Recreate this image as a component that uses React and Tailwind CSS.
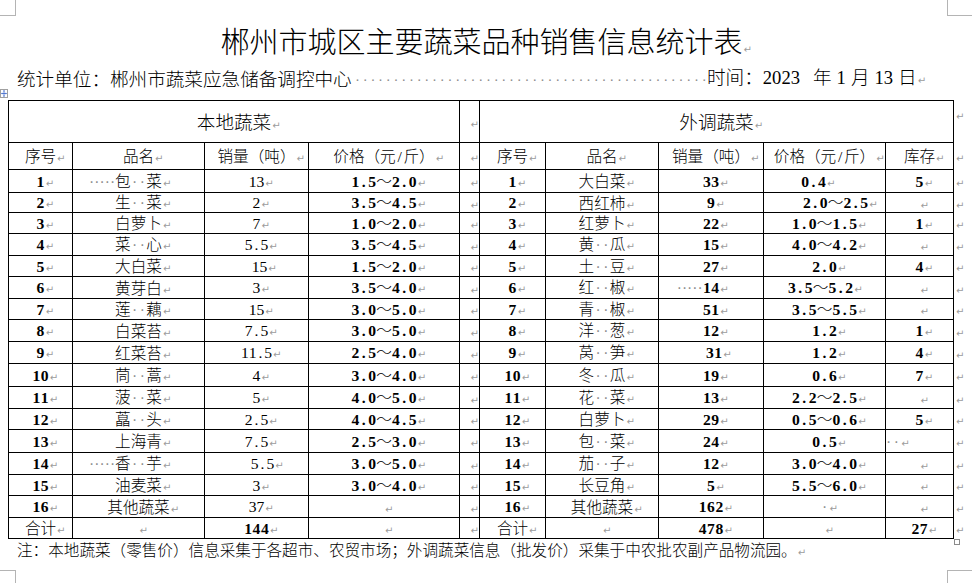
import React from 'react';

const CJK = "font-['Noto_Sans_CJK_SC',sans-serif]";

function Mark() {
  return (
    <span className="inline-block w-0 whitespace-nowrap font-['DejaVu_Sans',sans-serif] text-[10px] font-normal leading-none text-[#9c9c9c]">
      <span className="pl-[1px]">↵</span>
    </span>
  );
}

function Dot() {
  return (
    <span className="inline-block w-[7.8px] text-center font-['Liberation_Sans',sans-serif] font-normal text-[#8e8e8e]">·</span>
  );
}

function Ch({ c, bold }) {
  if (c === '·') return <Dot />;
  if (c.charCodeAt(0) < 128) {
    return (
      <span
        className={
          bold
            ? "inline-block w-[8.3px] text-center font-['Liberation_Serif',serif] font-bold"
            : "inline-block w-[7.8px] text-center font-['Liberation_Serif',serif] font-normal"
        }
      >
        {c}
      </span>
    );
  }
  return <span className="font-light">{c}</span>;
}

function T({ s = '', bold }) {
  const chars = [...s];
  let lead = 0;
  while (lead < chars.length && chars[lead] === '·') lead++;
  if (lead === chars.length) lead = 0;
  return (
    <>
      {lead > 0 && (
        <span className="inline-flex w-0 justify-end">
          {chars.slice(0, lead).map((c, i) => (
            <Dot key={i} />
          ))}
        </span>
      )}
      {chars.slice(lead).map((c, i) => (
        <Ch key={i} c={c} bold={bold} />
      ))}
    </>
  );
}

function Cell({ s, b, c = '', big }) {
  return (
    <div
      className={
        (big
          ? 'flex items-center justify-center whitespace-nowrap bg-white text-[18.6px] leading-none '
          : 'flex items-center justify-center whitespace-nowrap bg-white text-[15.6px] leading-none ') + c
      }
    >
      <span>
        <T s={s} bold={b} />
        <Mark />
      </span>
    </div>
  );
}

const boldDefault = [true, false, false, true, false, true, false, true, true, true];

const rows = [
  ['1', '·····包··菜', '13', '1.5～2.0', '', '1', '大白菜', '33', ['0.4', 'pr-[22px]'], '5'],
  ['2', '生··菜', '2', '3.5～4.5', '', '2', '西红柿', '9', ['2.0～2.5', 'pl-[22px]'], ''],
  ['3', '白萝卜', '7', '1.0～2.0', '', '3', '红萝卜', '22', '1.0～1.5', '1'],
  ['4', '菜··心', '5.5', '3.5～4.5', '', '4', '黄··瓜', '15', '4.0～4.2', ''],
  ['5', '大白菜', ['15', 'pl-[6px]'], '1.5～2.0', '', '5', '土··豆', '27', '2.0', '4'],
  ['6', '黄芽白', '3', '3.5～4.0', '', '6', '红··椒', '·····14', ['3.5～5.2', 'pr-[8px]'], ''],
  ['7', '莲··藕', '15', '3.0～5.0', '', '7', '青··椒', '51', '3.5～5.5', ''],
  ['8', '白菜苔', '7.5', '3.0～5.0', '', '8', '洋··葱', '12', '1.2', '1'],
  ['9', '红菜苔', '11.5', '2.5～4.0', '', '9', '莴··笋', ['31', 'pl-[6px]'], '1.2', '4'],
  ['10', '茼··蒿', '4', '3.0～4.0', '', '10', '冬··瓜', '19', '0.6', '7'],
  ['11', '菠··菜', '5', '4.0～5.0', '', '11', '花··菜', '13', '2.2～2.5', ''],
  ['12', '藠··头', '2.5', '4.0～4.5', '', '12', '白萝卜', '29', '0.5～0.6', '5'],
  ['13', '上海青', '7.5', '2.5～3.0', '', '13', '包··菜', '24', '0.5', ['··', 'pr-[54px]']],
  ['14', '·····香··芋', ['5.5', 'pl-[12px]'], '3.0～5.0', '', '14', '茄··子', '12', '3.0～4.0', ''],
  ['15', '油麦菜', '3', '3.0～4.0', '', '15', '长豆角', '5', '5.5～6.0', ''],
  ['16', '其他蔬菜', '37', '', '', '16', '其他蔬菜', '162', '·', ''],
  ['合计', '', ['144', '', true], '', '', '合计', '', '478', '', '27'],
];

const heads = ['序号', '品名', '销量（吨）', '价格（元/斤）', '', '序号', '品名', '销量（吨）', '价格（元/斤）', '库存'];

function Handle() {
  return (
    <div className="absolute left-0 top-[89px] flex h-[9px] w-[8px] items-center justify-center border border-[#a0a0a0] bg-white">
      <svg width="6" height="7" viewBox="0 0 6 7">
        <path d="M3 0.8V6.2M0.8 3.5H5.2" stroke="#3a64c8" strokeWidth="0.8" />
        <path d="M3 0L1.9 1.3H4.1Z M3 7L1.9 5.7H4.1Z M0 3.5L1.3 2.4V4.6Z M6 3.5L4.7 2.4V4.6Z" fill="#3a64c8" />
      </svg>
    </div>
  );
}

export default function App() {
  return (
    <div className={'relative h-[583px] w-[972px] overflow-hidden bg-white font-light text-black ' + CJK}>
      {/* page corner marks */}
      <div className="absolute left-0 top-0 h-[16px] w-[16px] border-b border-r border-[#b4b4b4]" />
      <div className="absolute left-[947px] top-0 h-[16px] w-[25px] border-b border-l border-[#b4b4b4]" />
      <div className="absolute left-0 top-[570px] h-[13px] w-[16px] border-r border-t border-[#b4b4b4]" />
      <div className="absolute left-[947px] top-[570px] h-[13px] w-[25px] border-l border-t border-[#b4b4b4]" />
      <Handle />
      <div className="absolute left-[954px] top-[539px] h-[6px] w-[6px] border border-[#8a8a8a] bg-white" />

      {/* title */}
      <div className="ml-[15px] mt-[22px] flex h-[36px] w-[933px] items-center justify-center whitespace-nowrap text-[29px] font-light leading-none">
        <span>
          郴州市城区主要蔬菜品种销售信息统计表
          <Mark />
        </span>
      </div>

      {/* subtitle */}
      <div className="mt-[8px] flex h-[25px] items-center whitespace-nowrap pl-[17px] text-[18.6px] font-light leading-none">
        <span className="w-[338px]">统计单位：郴州市蔬菜应急储备调控中心</span>
        <span className="flex w-[352px] justify-between">
          {Array.from({ length: 46 }).map((_, i) => (
            <span key={i} className="font-['Liberation_Sans',sans-serif] text-[15px] text-[#8e8e8e]">
              ·
            </span>
          ))}
        </span>
        <span className="font-['Liberation_Serif','Noto_Sans_CJK_SC',serif]">
          时间：2023<span className="inline-block w-[13px]" />年<span className="inline-block w-[5px]" />1<span className="inline-block w-[5px]" />月<span className="inline-block w-[5px]" />13<span className="inline-block w-[5px]" />日
          <Mark />
        </span>
      </div>

      {/* table */}
      <div className="ml-[8px] mt-[9px] flex">
        <div className="grid w-[946px] grid-cols-[63px_131px_103px_150px_19px_65px_112px_104px_121px_67px] grid-rows-[41px_26px_22px_19px_20px_21px_20px_21px_20px_21px_21px_22px_21px_20px_22px_21px_20px_21px_20px] gap-px bg-black p-px">
          <div className="col-span-4 flex">
            <Cell s="本地蔬菜" big c="flex-1" />
          </div>
          <Cell s="" />
          <div className="col-span-5 flex">
            <Cell s="外调蔬菜" big c="flex-1" />
          </div>
          {heads.map((h, i) => (
            <Cell key={'h' + i} s={h} />
          ))}
          {rows.map((r, ri) =>
            r.map((spec, ci) => {
              const s = Array.isArray(spec) ? spec[0] : spec;
              const c = Array.isArray(spec) ? spec[1] : '';
              const b = Array.isArray(spec) && spec[2] !== undefined ? spec[2] : boldDefault[ci];
              return <Cell key={ri + '-' + ci} s={s} b={b} c={c} />;
            })
          )}
        </div>
        <div className="grid w-[16px] grid-rows-[41px_26px_22px_19px_20px_21px_20px_21px_20px_21px_21px_22px_21px_20px_22px_21px_20px_21px_20px] gap-px py-px pl-[1px]">
          {Array.from({ length: 19 }).map((_, i) =>
            i === 0 ? (
              <div key={i} className="pt-[5px] text-[15.6px] leading-none">
                <Mark />
              </div>
            ) : (
              <div key={i} className="flex items-center text-[15.6px] leading-none">
                <span>
                  <Mark />
                </span>
              </div>
            )
          )}
        </div>
      </div>

      {/* footnote */}
      <div className="flex h-[22px] items-center whitespace-nowrap pl-[17px] text-[15.6px] font-light leading-none">
        <span>
          注：本地蔬菜（零售价）信息采集于各超市、农贸市场；外调蔬菜信息（批发价）采集于中农批农副产品物流园。
          <Mark />
        </span>
      </div>
    </div>
  );
}
